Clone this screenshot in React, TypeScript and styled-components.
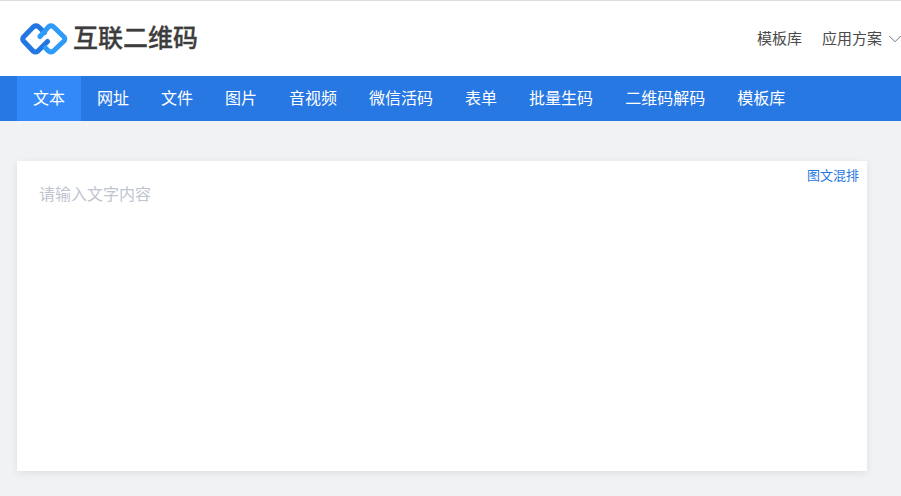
import styled, { createGlobalStyle } from "styled-components";
import { FiChevronDown } from "react-icons/fi";

const GlobalStyle = createGlobalStyle`
  html, body {
    margin: 0;
    padding: 0;
    background: #f0f2f4;
    font-family: "Liberation Sans", "Noto Sans CJK SC", sans-serif;
  }
`;

const Page = styled.div`
  width: 901px;
  height: 496px;
  overflow: hidden;
`;

const Header = styled.header`
  display: flex;
  justify-content: space-between;
  align-items: center;
  height: 75px;
  padding-left: 20px;
  background: #ffffff;
  border-top: 1px solid #dddddd;
`;

const Logo = styled.div`
  display: flex;
  align-items: center;
  gap: 5px;
`;

const LogoText = styled.span`
  color: #3d3d3d;
  font-size: 25px;
  font-weight: 500;
  line-height: 32px;
  padding-bottom: 2px;
  -webkit-text-stroke: 0.3px #3d3d3d;
`;

const HeaderLinks = styled.div`
  display: flex;
  align-items: center;
  gap: 20px;
`;

const HeaderLink = styled.a`
  display: flex;
  align-items: center;
  gap: 2px;
  color: #4a4a4a;
  font-size: 15px;
  line-height: 20px;
`;

const Chevron = styled(FiChevronDown)`
  margin-right: -5px;
  color: #666666;
  stroke-width: 1;
`;

const Nav = styled.nav`
  display: flex;
  height: 45px;
  padding-left: 17px;
  background: #2878e4;
`;

const NavItem = styled.a<{ $active?: boolean }>`
  display: flex;
  align-items: center;
  padding: 0 16px 3px;
  color: #ffffff;
  font-size: 16px;
  background: ${(p) => (p.$active ? "#3389f7" : "transparent")};
`;

const Content = styled.main`
  padding: 40px 34px 0 17px;
`;

const Card = styled.section`
  position: relative;
  height: 310px;
  padding: 23px 22px;
  box-sizing: border-box;
  background: #ffffff;
  box-shadow: 0 2px 8px rgba(0, 0, 0, 0.08);
`;

const Placeholder = styled.div`
  color: #bfc5d0;
  font-size: 16px;
  line-height: 22px;
`;

const MixButton = styled.a`
  position: absolute;
  top: 6px;
  right: 8px;
  color: #2878e4;
  font-size: 13px;
  line-height: 18px;
`;

const navItems = ["文本", "网址", "文件", "图片", "音视频", "微信活码", "表单", "批量生码", "二维码解码", "模板库"];

function LogoMark() {
  return (
    <svg width="48" height="32" viewBox="0 0 48 32" fill="none" strokeWidth="5" strokeLinecap="round" strokeLinejoin="round">
      <path d="M24.5 9.5 L18.5 3.8 Q16 2 13.5 3.8 L3.5 14 Q2 16 3.5 18 L13 28 Q15.5 30 18 28 L27.5 18.5" stroke="#2277e2" />
      <path d="M20 13.5 L28.5 3.8 Q31 2 33.5 3.8 L44 14 Q45.5 16 44 18 L33.5 28 Q31 30 28.5 28 L25.5 25" stroke="#2f9bf8" />
    </svg>
  );
}

export default function App() {
  return (
    <Page>
      <GlobalStyle />
      <Header>
        <Logo>
          <LogoMark />
          <LogoText>互联二维码</LogoText>
        </Logo>
        <HeaderLinks>
          <HeaderLink>模板库</HeaderLink>
          <HeaderLink>
            应用方案
            <Chevron size={22} />
          </HeaderLink>
        </HeaderLinks>
      </Header>
      <Nav>
        {navItems.map((item, i) => (
          <NavItem key={item} $active={i === 0}>
            {item}
          </NavItem>
        ))}
      </Nav>
      <Content>
        <Card>
          <Placeholder>请输入文字内容</Placeholder>
          <MixButton>图文混排</MixButton>
        </Card>
      </Content>
    </Page>
  );
}
